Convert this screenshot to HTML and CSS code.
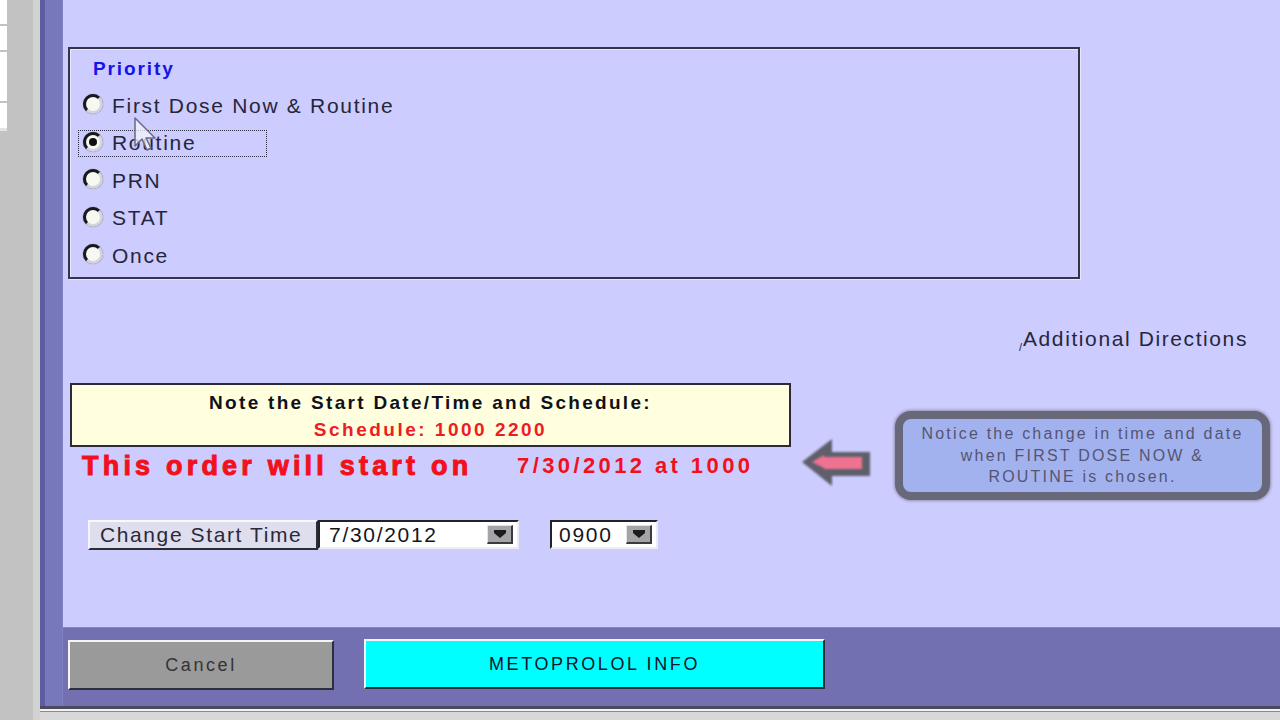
FILE: index.html
```html
<!DOCTYPE html>
<html>
<head>
<meta charset="utf-8">
<link rel="stylesheet" href="styles.css">
</head>
<body>
<div class="screen">
  <aside class="sidebar">
    <div class="cell c1"></div>
    <div class="cell c2"></div>
    <div class="cell c3"></div>
    <div class="cell c4"></div>
  </aside>
  <div class="window">
    <div class="frame">
      <div class="frame-left"></div>
      <div class="main">
        <main class="panel">
          <section class="prio">
            <div class="prio-title">Priority</div>
            <div class="opts">
              <div class="row"><label class="opt"><span class="radio"></span><span class="lbl">First Dose Now &amp; Routine</span></label></div>
              <div class="row"><label class="opt focused"><span class="radio on"></span><span class="lbl">Routine</span></label></div>
              <div class="row"><label class="opt"><span class="radio"></span><span class="lbl">PRN</span></label></div>
              <div class="row"><label class="opt"><span class="radio"></span><span class="lbl">STAT</span></label></div>
              <div class="row"><label class="opt"><span class="radio"></span><span class="lbl">Once</span></label></div>
            </div>
          </section>

          <div class="additional"><span class="mnem">/</span>Additional Directions</div>

          <div class="note">
            <div class="note-title">Note the Start Date/Time and Schedule:</div>
            <div class="note-sched">Schedule: 1000 2200</div>
          </div>

          <div class="startrow">
            <span class="start-lead">This order will start on</span>
            <span class="start-date">7/30/2012 at 1000</span>
          </div>

          <div class="changerow">
            <button class="btn-change">Change Start Time</button>
            <div class="combo date"><span class="combo-val">7/30/2012</span><span class="dd"><svg width="14" height="9" viewBox="0 0 14 9"><rect x="1" y="0" width="12" height="3" fill="#1c1c1c"/><polygon points="1,3 13,3 7,8" fill="#1c1c1c"/></svg></span></div>
            <div class="combo time"><span class="combo-val">0900</span><span class="dd"><svg width="14" height="9" viewBox="0 0 14 9"><rect x="1" y="0" width="12" height="3" fill="#1c1c1c"/><polygon points="1,3 13,3 7,8" fill="#1c1c1c"/></svg></span></div>
          </div>

          <svg class="arrow" width="74" height="52" viewBox="0 0 74 52">
            <defs><filter id="b" x="-10%" y="-10%" width="120%" height="120%"><feGaussianBlur stdDeviation="1"/></filter></defs>
            <polygon points="2,25 32,2 32,15 70,15 70,39 32,39 32,49" fill="#5e5e6c" filter="url(#b)"/>
            <polygon points="12,25 24,18 24,20 62,20 62,32 24,32 24,31" fill="#ef7290" filter="url(#b)"/>
          </svg>

          <div class="callout">
            <div class="callout-line">Notice the change in time and date</div>
            <div class="callout-line">when FIRST DOSE NOW &amp;</div>
            <div class="callout-line">ROUTINE is chosen.</div>
          </div>

          <svg class="cursor" width="28" height="36" viewBox="0 0 28 36">
            <path d="M2,2 L2,30 L9,23 L14,34 L18,32 L13,22 L22,22 Z" fill="#f4f4ff" fill-opacity="0.75" stroke="#6a6a80" stroke-width="1.5" stroke-linejoin="round"/>
          </svg>
        </main>
        <footer class="buttonbar">
          <button class="btn-cancel">Cancel</button>
          <button class="btn-info">METOPROLOL INFO</button>
        </footer>
      </div>
    </div>
    <div class="status"></div>
  </div>
</div>
</body>
</html>
```

FILE: styles.css
```css
* { box-sizing: border-box; }

body {
  margin: 0;
  width: 1280px;
  height: 720px;
  overflow: hidden;
  background: #c2c2c2;
  font-family: "Liberation Sans", Arial, sans-serif;
  color: #26263a;
}

.screen {
  display: flex;
  width: 1280px;
  height: 720px;
}

.sidebar {
  width: 40px;
  flex: none;
  background: #c2c2c2;
  border-right: 7px solid #d2d2d2;
  display: flex;
  flex-direction: column;
  gap: 2px;
}

.cell { width: 7px; background: #ffffff; }
.c1 { height: 24px; }
.c2 { height: 24px; }
.c3 { height: 49px; }
.c4 { height: 28px; border-bottom: 3px solid #e2e2e2; }

.window {
  flex: 1;
  display: flex;
  flex-direction: column;
}

.frame {
  flex: 1;
  display: flex;
}

.frame-left {
  width: 23px;
  flex: none;
  background: #7777bb;
  border-left: 5px solid #5d5da2;
  border-right: 1px solid #8080c4;
}

.main {
  flex: 1;
  display: flex;
  flex-direction: column;
}

.panel {
  position: relative;
  height: 628px;
  flex: none;
  background: #ccccff;
  padding-left: 5px;
  border-bottom: 1px solid #8684c2;
  display: flex;
  flex-direction: column;
  align-items: flex-start;
}

/* Priority group */
.prio {
  margin-top: 47px;
  width: 1012px;
  height: 232px;
  border: 2px solid #33334a;
  box-shadow: inset 1px 1px 0 #e6e6ff, 1px 1px 0 #e6e6ff;
  display: flex;
  flex-direction: column;
}

.prio-title {
  margin-top: 9px;
  margin-left: 23px;
  height: 22px;
  line-height: 22px;
  font-size: 19px;
  font-weight: bold;
  letter-spacing: 1.9px;
  color: #1414e6;
}

.opts {
  margin-top: 7px;
  display: flex;
  flex-direction: column;
}

.row {
  height: 37.5px;
  display: flex;
  align-items: center;
  padding-left: 8px;
}

.opt {
  height: 27px;
  display: flex;
  align-items: center;
  gap: 9px;
  padding-left: 4px;
  border: 1px solid transparent;
}

.opt.focused {
  width: 189px;
  border: 1px dotted #2a2a40;
}

.radio {
  width: 20px;
  height: 20px;
  flex: none;
  border-radius: 50%;
  background: #f8f8f2;
  border: 3px solid;
  border-color: #18181c #d4d4dc #d4d4dc #18181c;
  box-shadow: 0 0 1px #55556a;
  display: flex;
  align-items: center;
  justify-content: center;
  margin-top: -3px;
}

.radio.on::after {
  content: "";
  width: 8px;
  height: 8px;
  border-radius: 50%;
  background: #101010;
}

.lbl {
  font-size: 21px;
  letter-spacing: 1.7px;
  color: #26263a;
  white-space: nowrap;
}

/* Additional directions */
.additional {
  margin-top: 48px;
  align-self: stretch;
  text-align: right;
  padding-right: 32px;
  height: 24px;
  line-height: 24px;
  font-size: 21px;
  letter-spacing: 1.6px;
  color: #26263a;
}

.mnem {
  display: inline-block;
  font-size: 11px;
  letter-spacing: 0;
  margin-right: 1px;
  transform: translateY(5px);
}

/* Note box */
.note {
  margin-top: 32px;
  margin-left: 2px;
  width: 721px;
  height: 64px;
  background: #ffffdf;
  border: 2px solid #2a2a38;
  padding-top: 4px;
  text-align: center;
}

.note-title {
  height: 27px;
  line-height: 27px;
  font-size: 19px;
  font-weight: bold;
  letter-spacing: 2.3px;
  color: #111118;
}

.note-sched {
  height: 27px;
  line-height: 27px;
  font-size: 19px;
  font-weight: bold;
  letter-spacing: 2.5px;
  color: #ee1c24;
}

/* Start row */
.startrow {
  margin-top: 4px;
  padding-left: 14px;
  height: 30px;
  display: flex;
  align-items: center;
  color: #f2101c;
  white-space: nowrap;
}

.start-lead {
  width: 435px;
  font-size: 27px;
  font-weight: bold;
  letter-spacing: 4.2px;
  -webkit-text-stroke: 1px #f2101c;
}

.start-date {
  font-size: 22px;
  font-weight: bold;
  letter-spacing: 3.4px;
}

/* Change start time row */
.changerow {
  margin-top: 39px;
  padding-left: 20px;
  display: flex;
  align-items: flex-start;
}

.btn-change {
  width: 230px;
  height: 30px;
  margin: 0;
  padding: 0 0 0 10px;
  text-align: left;
  font-family: "Liberation Sans", Arial, sans-serif;
  font-size: 21px;
  letter-spacing: 1.6px;
  color: #2a2a38;
  background: #dedeee;
  border: 2px solid;
  border-color: #f8f8ff #2c2c34 #2c2c34 #f4f4ff;
}

.combo {
  height: 29px;
  background: #ffffff;
  border: 2px solid;
  border-color: #222228 #ececf6 #ececf6 #222228;
  display: flex;
  align-items: center;
  justify-content: space-between;
  padding: 0 4px 0 9px;
}

.combo.date { width: 201px; }
.combo.time { width: 108px; margin-left: 31px; padding-left: 7px; }

.combo-val {
  font-size: 21px;
  letter-spacing: 1.7px;
  color: #15151c;
}

.dd {
  width: 26px;
  height: 19px;
  background: #a4a4a8;
  border: 1px solid;
  border-color: #e4e4e8 #3a3a40 #3a3a40 #e4e4e8;
  border-width: 1px 2px 2px 1px;
  display: flex;
  align-items: center;
  justify-content: center;
}

/* Annotations overlaid */
.arrow {
  position: absolute;
  left: 737px;
  top: 437px;
}

.callout {
  position: absolute;
  left: 832px;
  top: 411px;
  width: 375px;
  height: 89px;
  border: 8px solid #68687a;
  border-radius: 16px;
  background: #a2b2ef;
  box-shadow: 0 0 3px 1px #9090a8;
  padding-top: 4px;
  text-align: center;
}

.callout-line {
  height: 21.5px;
  line-height: 21.5px;
  font-size: 16px;
  letter-spacing: 2.2px;
  color: #555572;
  white-space: nowrap;
}

.cursor {
  position: absolute;
  left: 70px;
  top: 116px;
}

/* Bottom button bar */
.buttonbar {
  flex: 1;
  background: #7370b2;
  display: flex;
  align-items: flex-start;
  gap: 30px;
  padding: 12px 0 0 5px;
}

.btn-cancel,
.btn-info {
  margin: 0;
  font-family: "Liberation Sans", Arial, sans-serif;
  font-size: 18px;
  border: 2px solid;
  border-color: #f4f4f8 #2e2e3a #2e2e3a #f4f4f8;
}

.btn-cancel {
  width: 266px;
  height: 50px;
  background: #9a9a9a;
  color: #333338;
  letter-spacing: 2.6px;
}

.btn-info {
  width: 461px;
  height: 50px;
  margin-top: -1px;
  background: #00ffff;
  color: #14142a;
  letter-spacing: 2.6px;
}

.status {
  height: 14px;
  flex: none;
  background: #d8d8d8;
  border-top: 3px solid #4a4a5c;
  box-shadow: inset 0 2px 0 #f2f2f2, inset 0 3px 0 #8a8a96;
}
```
